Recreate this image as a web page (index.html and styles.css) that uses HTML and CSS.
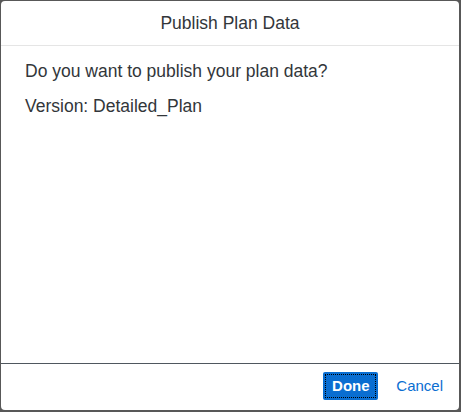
FILE: index.html
```html
<!DOCTYPE html>
<html>
<head>
<meta charset="utf-8">
<link rel="stylesheet" href="styles.css">
</head>
<body>
<div class="dialog">
  <header class="dialog-header">Publish Plan Data</header>
  <section class="dialog-content">
    <p class="msg">Do you want to publish your plan data?</p>
    <p class="msg">Version: Detailed_Plan</p>
  </section>
  <footer class="dialog-footer">
    <button class="btn btn-primary">Done</button>
    <button class="btn btn-link">Cancel</button>
  </footer>
</div>
</body>
</html>
```
FILE: styles.css
```css
html, body {
  margin: 0;
  padding: 0;
  height: 100%;
}
body {
  background: #585858;
  font-family: "Liberation Sans", Arial, sans-serif;
  color: #32363a;
  padding: 1px 2px 2px 1px;
  box-sizing: border-box;
}
.dialog {
  background: #fff;
  border-radius: 4px;
  height: 100%;
  display: flex;
  flex-direction: column;
  overflow: hidden;
}
.dialog-header {
  height: 44px;
  border-bottom: 1px solid #e5e5e5;
  display: flex;
  align-items: center;
  justify-content: center;
  font-size: 17.5px;
}
.dialog-content {
  flex: 1;
  padding: 15px 24px 0 24px;
}
.msg {
  margin: 0 0 15px 0;
  font-size: 17.5px;
  line-height: 20px;
}
.dialog-footer {
  height: 47px;
  border-top: 1px solid #4f575e;
  display: flex;
  align-items: center;
  justify-content: flex-end;
  padding-right: 10px;
  padding-bottom: 3px;
  box-sizing: border-box;
  gap: 12px;
}
.btn {
  font-family: "Liberation Sans", Arial, sans-serif;
  font-size: 15px;
  border: none;
  background: none;
  cursor: pointer;
}
.btn-primary {
  background: #0a6ed1;
  color: #fff;
  font-weight: bold;
  height: 28px;
  width: 55px;
  border-radius: 2px;
  outline: 1px dotted #000;
  outline-offset: -3px;
  padding: 0;
}
.btn-link {
  color: #0a6ed1;
  padding: 0 6px;
  height: 28px;
}
```
